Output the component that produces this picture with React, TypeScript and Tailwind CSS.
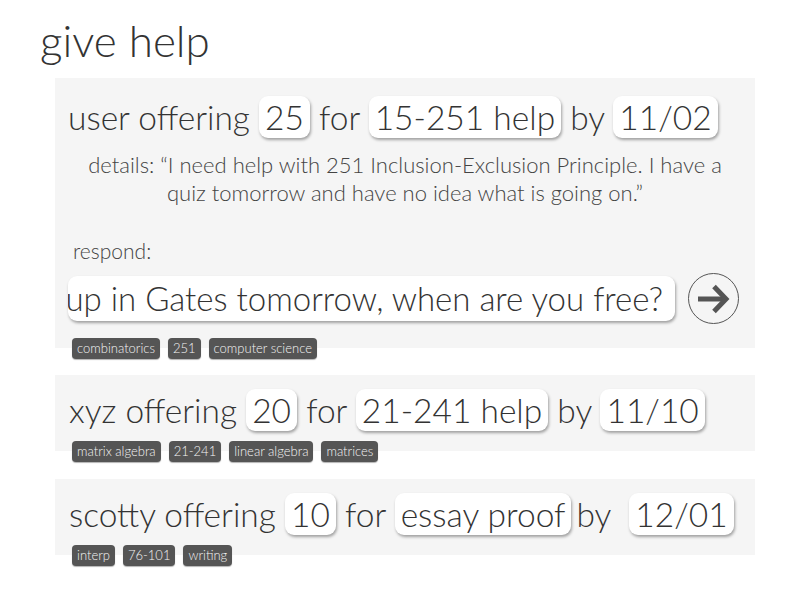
import React from "react";

const Box = ({ children, className = "" }: { children: React.ReactNode; className?: string }) => (
  <span
    className={
      "inline-block bg-white rounded-[9px] px-[6px] leading-[42px] shadow-[1px_2px_3px_rgba(0,0,0,0.35)] " +
      className
    }
  >
    {children}
  </span>
);

const Tag = ({ children }: { children: React.ReactNode }) => (
  <span className="inline-block bg-[#555555] text-[#f4f4f4] text-[13px] leading-[21px] h-[21px] px-[5px] rounded-[4px] shadow-[0_1px_1px_rgba(0,0,0,0.3)]">
    {children}
  </span>
);

const Tags = ({ items }: { items: string[] }) => (
  <div className="relative -mt-[10px] ml-[17px] flex gap-[8px]">
    {items.map((t) => (
      <Tag key={t}>{t}</Tag>
    ))}
  </div>
);

export default function App() {
  return (
    <div
      className="w-[800px] h-[600px] bg-white text-[#333333] font-light"
      style={{ fontFamily: "Lato, 'Liberation Sans', sans-serif" }}
    >
      <div className="pl-[40px] pt-[14px]">
        <h1 className="text-[44px] leading-[52px] font-light">give help</h1>
      </div>
      <div className="pl-[55px] w-[755px] mt-[12px]">
        {/* card 1 */}
        <div className="bg-[#f5f5f5] pt-[18px] pb-[24px] px-[13px]">
          <div className="text-[33.5px] whitespace-nowrap leading-[42px]">
            user offering <Box>25</Box> for <Box>15-251 help</Box> by <Box>11/02</Box>
          </div>
          <p className="mt-[13px] text-[22px] leading-[28px] text-[#444] text-center px-[16px]">
            details: “I need help with 251 Inclusion-Exclusion Principle. I have a quiz tomorrow and have no idea what
            is going on.”
          </p>
          <div className="mt-[32px] pl-[5px] text-[21px] leading-[24px] text-[#444]">respond:</div>
          <div className="mt-[10px] flex items-center gap-[13px]">
            <div className="w-[607px] h-[45px] bg-white rounded-[9px] shadow-[1px_2px_3px_rgba(0,0,0,0.35)] overflow-hidden flex justify-end items-center pr-[12px]">
              <span className="whitespace-nowrap text-[33px] leading-[45px]">
                I can meet up in Gates tomorrow, when are you free?
              </span>
            </div>
            <div className="w-[51px] h-[51px] rounded-full border-[1.5px] border-[#555] flex items-center justify-center">
              <svg width="36" height="36" viewBox="0 0 36 36">
                <path d="M2 18 H29" stroke="#555" strokeWidth="5" fill="none" />
                <path d="M18 5.5 L30 18 L18 30.5" stroke="#555" strokeWidth="5" fill="none" strokeLinejoin="miter" />
              </svg>
            </div>
          </div>
        </div>
        <Tags items={["combinatorics", "251", "computer science"]} />

        {/* card 2 */}
        <div className="mt-[16px] bg-[#f5f5f5] pt-[14px] pb-[19px] px-[14px]">
          <div className="text-[33.5px] whitespace-nowrap leading-[43px]">
            xyz offering <Box>20</Box> for <Box>21-241 help</Box> by <Box>11/10</Box>
          </div>
        </div>
        <Tags items={["matrix algebra", "21-241", "linear algebra", "matrices"]} />

        {/* card 3 */}
        <div className="mt-[17px] bg-[#f5f5f5] pt-[14px] pb-[20px] px-[14px]">
          <div className="text-[33.5px] whitespace-nowrap leading-[42px]">
            scotty offering <Box>10</Box> for <Box>essay proof</Box>
            <span className="ml-[5px]">by</span>
            <Box className="ml-[18px]">12/01</Box>
          </div>
        </div>
        <Tags items={["interp", "76-101", "writing"]} />
      </div>
    </div>
  );
}
